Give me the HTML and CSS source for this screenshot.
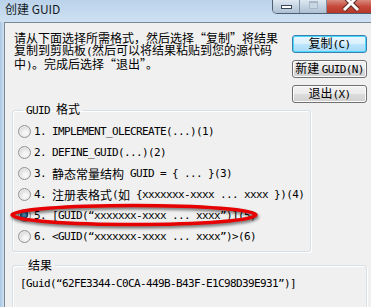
FILE: index.html
```html
<!DOCTYPE html>
<html lang="zh-CN">
<head>
<meta charset="UTF-8">
<title>创建 GUID</title>
<link rel="stylesheet" href="styles.css">
</head>
<body>
    <div class="window">
        <div class="titlebar">
            <span class="title">创建 GUID</span>
            <div class="caption-buttons">
                <span class="cap cap-min"><i></i></span>
                <span class="cap cap-max"><i></i></span>
                <span class="cap cap-close">
                    <svg width="20" height="12" viewBox="0 0 20 12">
                        <path d="M3 -4 L10 3 L17 -4 M3 10 L10 3 L17 10" stroke="#5a2a24" stroke-width="5" fill="none"/>
                        <path d="M3 -4 L10 3 L17 -4 M3 10 L10 3 L17 10" stroke="#fff" stroke-width="3" fill="none"/>
                    </svg>
                </span>
            </div>
        </div>
        <div class="main">
            <div class="frame"></div>
            <div class="client">
                <div class="top">
                    <p class="desc">请从下面选择所需格式，然后选择“复制”将结果<br>复制到剪贴板<span class="m">(</span>然后可以将结果粘贴到您的源代码<br>中<span class="m">)</span>。完成后选择“退出”。</p>
                    <div class="buttons">
                        <button class="btn btn-default">复制<span class="m">(C)</span></button>
                        <button class="btn">新建 <span class="m">GUID(N)</span></button>
                        <button class="btn">退出<span class="m">(X)</span></button>
                    </div>
                </div>

                <fieldset class="group group-format">
                    <legend><span class="m">GUID </span>格式</legend>
                    <div class="opt"><span class="radio"></span><span class="m">1. IMPLEMENT_OLECREATE(...)(1)</span></div>
                    <div class="opt"><span class="radio"></span><span class="m">2. DEFINE_GUID(...)(2)</span></div>
                    <div class="opt"><span class="radio"></span><span class="m">3. </span>静态常量结构<span class="m"> GUID = { ... }(3)</span></div>
                    <div class="opt"><span class="radio"></span><span class="m">4. </span>注册表格式<span class="m">(</span>如<span class="m"> {xxxxxxx-xxxx ... xxxx })(4)</span></div>
                    <div class="opt"><span class="radio checked"></span><span class="m">5. [GUID(“xxxxxxx-xxxx ... xxxx”)](5)</span></div>
                    <div class="opt"><span class="radio"></span><span class="m">6. &lt;GUID(“xxxxxxx-xxxx ... xxxx”)&gt;(6)</span></div>
                </fieldset>

                <fieldset class="group group-result">
                    <legend>结果</legend>
                    <div class="result m">[Guid(“62FE3344-C0CA-449B-B43F-E1C98D39E931”)]</div>
                </fieldset>
            </div>
        </div>

        <!-- red mark drawn over option 5 -->
        <svg class="lasso" width="262" height="34" viewBox="0 0 262 34">
            <ellipse cx="128" cy="15" rx="122" ry="9.5" fill="none" stroke="#e60000" stroke-width="3.5"/>
        </svg>
    </div>
</body>
</html>
```

FILE: styles.css
```css
body {
    margin: 0;
    padding: 0;
    background-color: #f0f0f0;
    font-family: "Noto Sans CJK SC", sans-serif;
    color: #000;
}
.window {
    position: relative;
    width: 371px;
    height: 307px;
    overflow: hidden;
}

/* title bar */
.titlebar {
    height: 22px;
    display: flex;
    justify-content: space-between;
    align-items: flex-start;
    background: linear-gradient(#bad2ea, #cfe1f2);
}
.title {
    padding: 2px 0 0 5px;
    font-size: 12px;
    line-height: 14px;
    color: #151c26;
}
.caption-buttons {
    display: flex;
    height: 13px;
    margin-right: -4px;
    border: 1px solid #4e5f73;
    border-top: none;
    border-radius: 0 0 5px 5px;
    overflow: hidden;
}
.cap {
    display: flex;
    justify-content: center;
    align-items: flex-start;
    height: 13px;
}
.cap-min, .cap-max {
    width: 26px;
    background: linear-gradient(#dfe8f1, #c4d3e2 50%, #adc0d3);
    border-right: 1px solid #7e8fa3;
}
.cap-min i {
    display: block;
    width: 9px;
    height: 2px;
    margin-top: 5px;
    background: #fff;
    border: 1px solid #3b4756;
}
.cap-max i {
    display: block;
    width: 7px;
    height: 5px;
    margin-top: 1px;
    border: 1px solid #a9b8c8;
    border-top-width: 2px;
    background: #c9d6e3;
}
.cap-close {
    width: 47px;
    background: linear-gradient(#d98b7f, #c64a3c 50%, #b73627);
}

/* client area */
.main {
    display: flex;
    height: 285px;
}
.frame {
    width: 4px;
    background: linear-gradient(90deg, #a9c5e1, #cfe1f2);
}
.client {
    flex: 1;
    border-left: 1px solid #7a8998;
    border-top: 1px solid #7a8998;
    padding: 9px 4px 0 7px;
    font-size: 12px;
    line-height: 12px;
}
.m {
    font-family: "DejaVu Sans Mono", monospace;
    font-size: 11px;
    letter-spacing: -0.62px;
}

.top {
    display: flex;
    justify-content: space-between;
    height: 71px;
}
.desc {
    margin: 0;
    padding-left: 2px;
    line-height: 12px;
}
.buttons {
    display: flex;
    flex-direction: column;
    gap: 7px;
    margin-top: 3px;
}
.btn {
    width: 75px;
    height: 18px;
    padding: 0;
    font-family: "Noto Sans CJK SC", sans-serif;
    font-size: 12px;
    line-height: 14px;
    color: #000;
    border: 1px solid #707070;
    border-radius: 3px;
    background: linear-gradient(#f2f2f2, #ebebeb 50%, #dddddd 50%, #cfcfcf);
    box-shadow: inset 0 0 0 1px #fcfcfc;
}
.btn-default {
    border-color: #3c7fb1;
    box-shadow: inset 0 0 0 1px #48d8fb;
    background: linear-gradient(#eaf6fd, #d9f0fc 50%, #bee6fd 50%, #a7d9f5);
}

/* group boxes */
.group {
    margin: 0;
    padding: 4px 0 4px 5px;
    border: 1px solid #d5dfe5;
    border-radius: 3px;
    box-shadow: 1px 1px 0 #fff, inset 1px 1px 0 #fff;
}
.group legend {
    margin-left: 5px;
    padding: 0 3px;
    line-height: 12px;
}
.group-format {
    width: 292px;
}
.group-result {
    margin-top: 7px;
    height: 60px;
    padding-top: 7px;
    padding-left: 7px;
}

.opt {
    display: flex;
    align-items: center;
    height: 21px;
    white-space: pre;
}
.radio {
    width: 11px;
    height: 11px;
    margin-right: 3px;
    border: 1px solid #8f9497;
    border-radius: 50%;
    background: radial-gradient(circle at 60% 65%, #f6f6f6 20%, #d9d9d9 70%, #c8c8c8);
    box-shadow: inset 0 0 0 1px #ececec;
}
.radio.checked {
    background: radial-gradient(circle at 45% 40%, #7cc3e6 0, #2b78a7 25%, #143f5c 45%, #dcdcdc 50%, #d0d0d0);
}
.result {
    white-space: pre;
    line-height: 12px;
}

/* the red hand-drawn mark */
.lasso {
    position: absolute;
    left: 6px;
    top: 200px;
    filter: drop-shadow(1px 2px 1.5px rgba(0, 0, 0, 0.55));
}
```
